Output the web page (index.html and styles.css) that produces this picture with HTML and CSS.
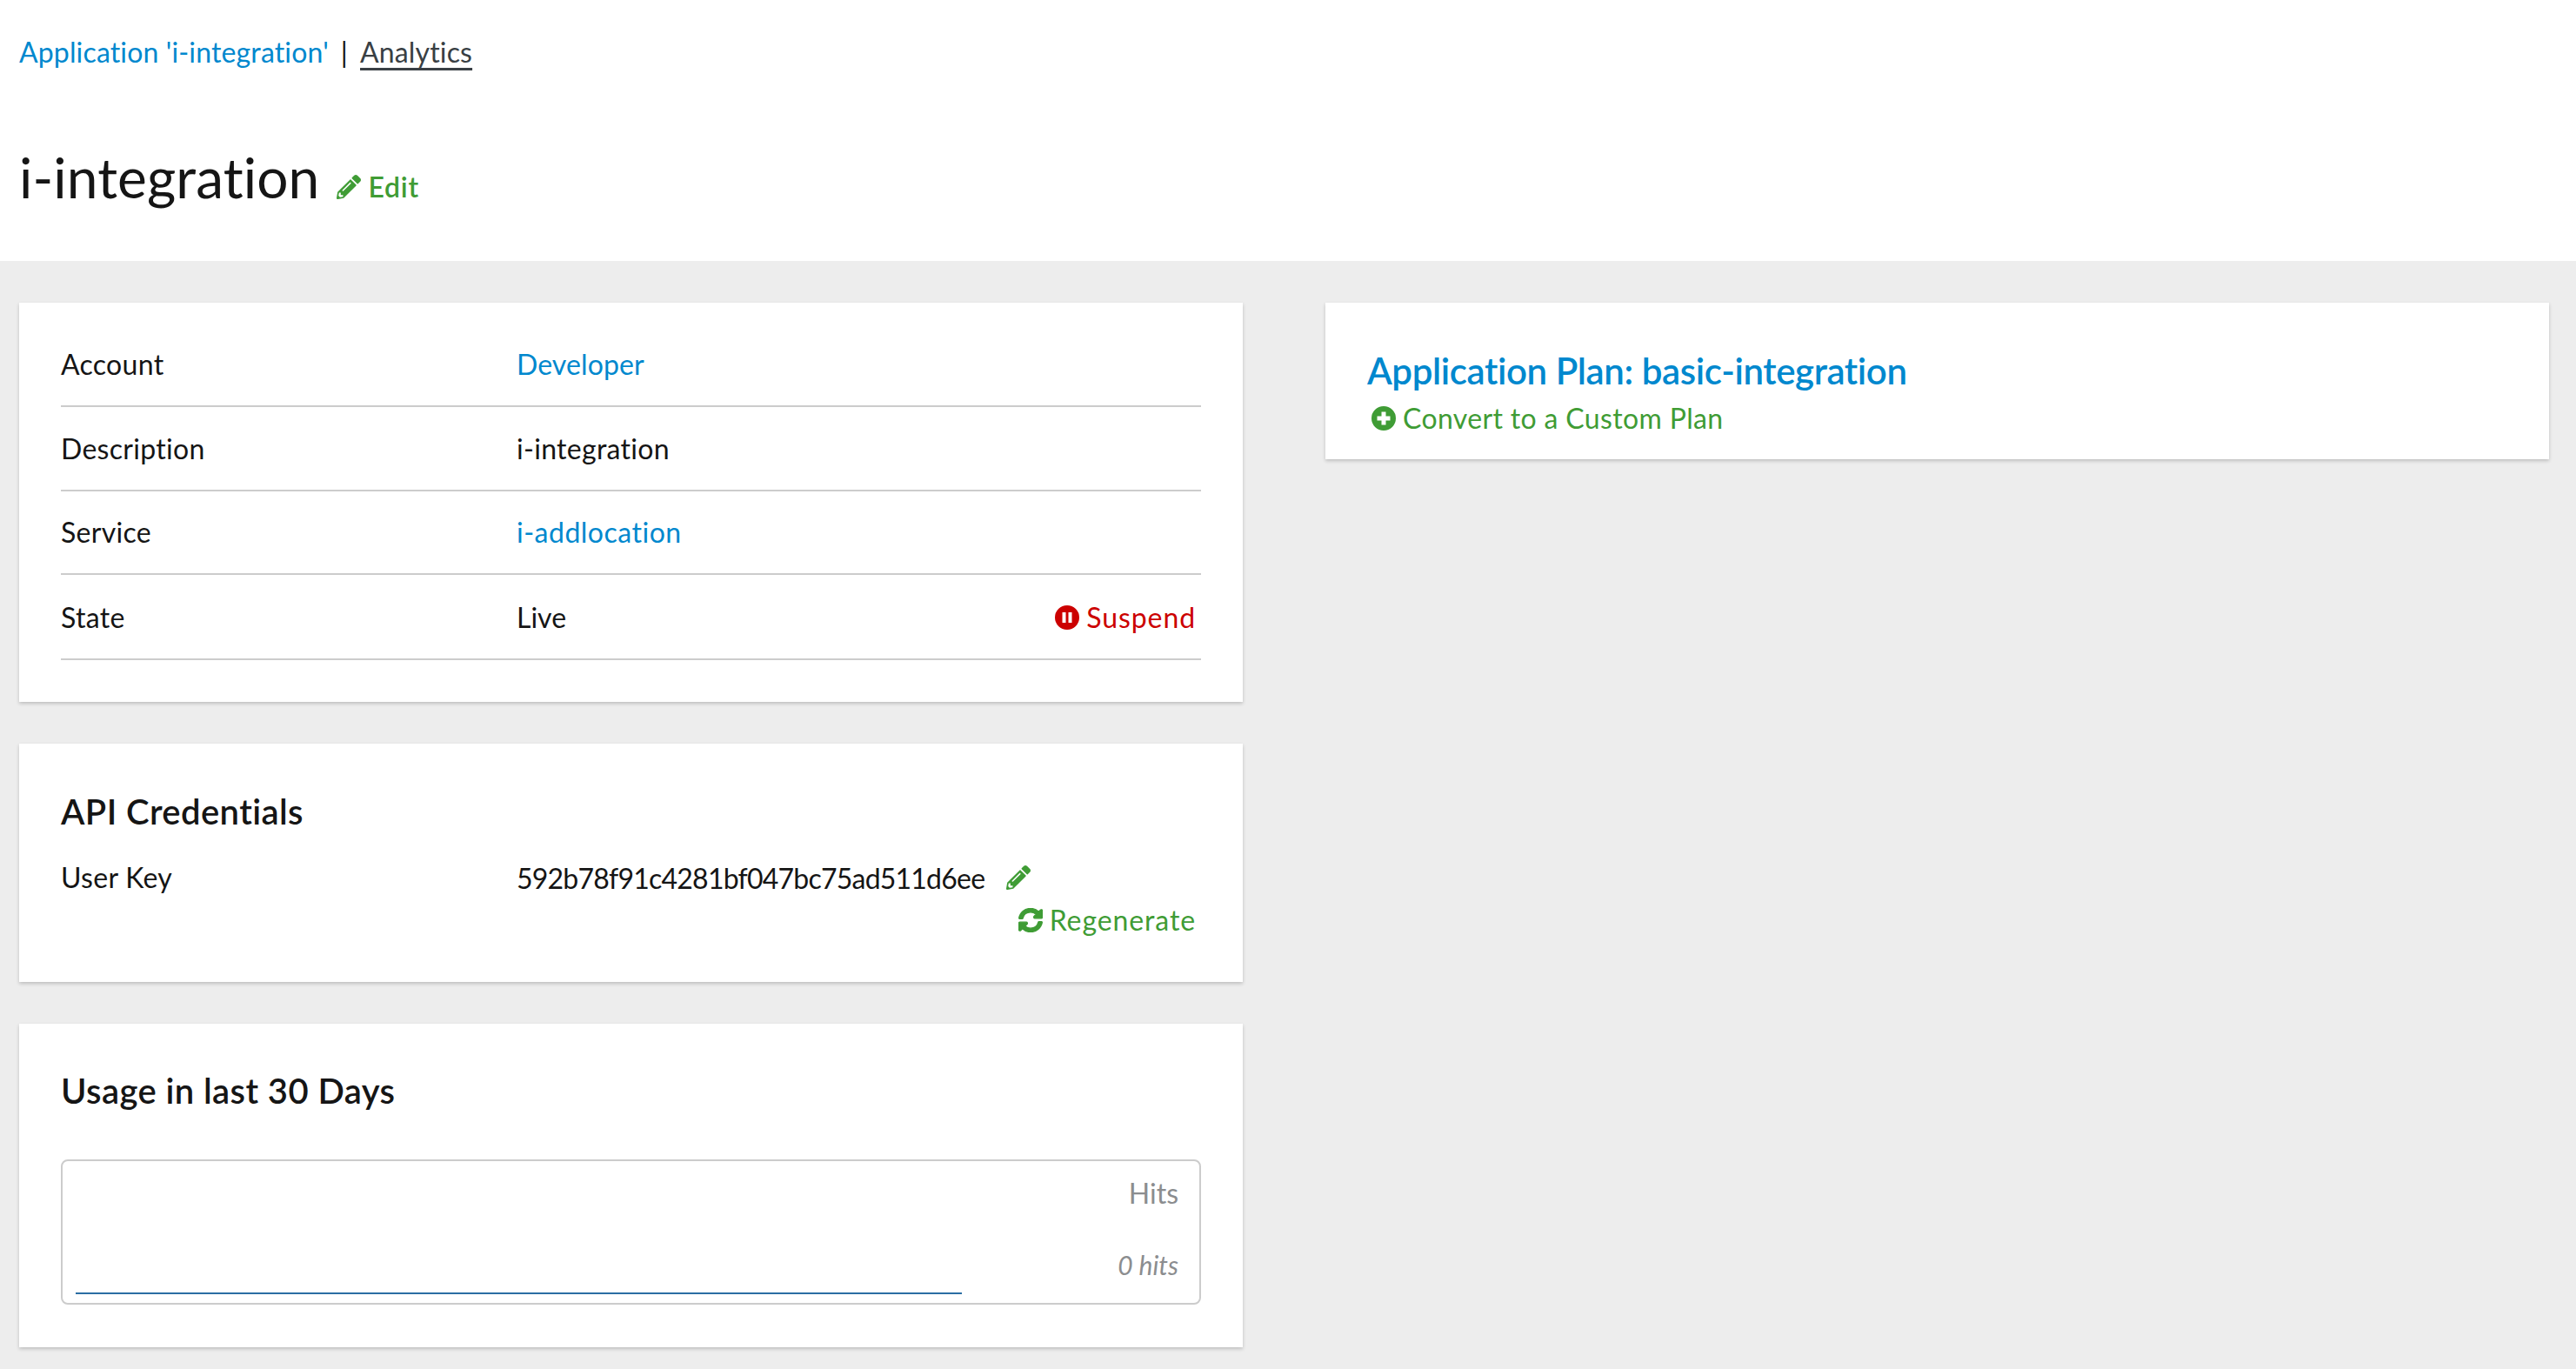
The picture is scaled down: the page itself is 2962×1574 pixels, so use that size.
FILE: index.html
```html
<!DOCTYPE html>
<html lang="en">
<head>
<meta charset="utf-8">
<title>i-integration</title>
<link rel="stylesheet" href="styles.css">
</head>
<body>
<svg class="defs" width="0" height="0" aria-hidden="true">
  <symbol id="pencil" viewBox="0 0 512 512"><path d="M497.9 142.1l-46.1 46.1c-4.7 4.7-12.3 4.7-17 0l-111-111c-4.7-4.7-4.7-12.3 0-17l46.1-46.1c18.7-18.7 49.1-18.7 67.9 0l60.1 60.1c18.8 18.7 18.8 49.1 0 67.9zM284.2 99.8L21.6 362.4.4 483.9c-2.9 16.4 11.4 30.6 27.8 27.8l121.5-21.3 262.6-262.6c4.7-4.7 4.7-12.3 0-17l-111-111c-4.8-4.7-12.4-4.7-17.1 0zM124.1 339.9c-5.5-5.5-5.5-14.3 0-19.8l154-154c5.5-5.5 14.3-5.5 19.8 0s5.5 14.3 0 19.8l-154 154c-5.5 5.5-14.3 5.5-19.8 0zM88 424h48v36.3l-64.5 11.3-31.1-31.1L51.7 376H88v48z"/></symbol>
  <symbol id="sync" viewBox="0 0 512 512"><path stroke="currentColor" stroke-width="24" d="M370.72 133.28C339.458 104.008 298.888 87.962 255.848 88c-77.458.068-144.328 53.178-162.791 126.85-1.344 5.363-6.122 9.15-11.651 9.15H24.103c-7.498 0-13.194-6.807-11.807-14.176C33.933 94.924 134.813 8 256 8c66.448 0 126.791 26.136 171.315 68.685L463.03 40.97C478.149 25.851 504 36.559 504 57.941V192c0 13.255-10.745 24-24 24H345.941c-21.382 0-32.09-25.851-16.971-40.971l41.75-41.749zM32 296h134.059c21.382 0 32.09 25.851 16.971 40.971l-41.75 41.75c31.262 29.273 71.835 45.319 114.876 45.28 77.418-.07 144.315-53.144 162.787-126.849 1.344-5.363 6.122-9.15 11.651-9.15h57.304c7.498 0 13.194 6.807 11.807 14.176C478.067 417.076 377.187 504 256 504c-66.448 0-126.791-26.136-171.315-68.685L48.97 471.03C33.851 486.149 8 475.441 8 454.059V320c0-13.255 10.745-24 24-24z"/></symbol>
  <symbol id="plus" viewBox="0 0 28 28"><path fill-rule="evenodd" d="M14 0a14 14 0 1 1 0 28a14 14 0 1 1 0-28zM11.5 6.5v5h-5v5h5v5h5v-5h5v-5h-5v-5z"/></symbol>
  <symbol id="pause" viewBox="0 0 28 28"><path fill-rule="evenodd" d="M14 0a14 14 0 1 1 0 28a14 14 0 1 1 0-28zM8.5 8v12h4v-12zM15.5 8v12h4v-12z"/></symbol>
</svg>

<header class="top">
  <nav class="crumbs">
    <a class="link" href="#">Application 'i-integration'</a>
    <span class="sep">|</span>
    <a class="crumb-active" href="#">Analytics</a>
  </nav>
  <div class="title-row">
    <h1 class="title">i-integration</h1>
    <a class="edit" href="#"><svg class="ico ico-edit"><use href="#pencil"/></svg>Edit</a>
  </div>
</header>

<main class="layout">
  <div class="col">
    <section class="card card-details">
      <div class="row">
        <div class="label">Account</div>
        <div class="value"><a class="link" href="#">Developer</a></div>
      </div>
      <div class="row">
        <div class="label">Description</div>
        <div class="value desc">i-integration</div>
      </div>
      <div class="row">
        <div class="label">Service</div>
        <div class="value"><a class="link" href="#">i-addlocation</a></div>
      </div>
      <div class="row row-state">
        <div class="label">State</div>
        <div class="value">Live</div>
        <a class="action danger" href="#"><svg class="ico"><use href="#pause"/></svg>Suspend</a>
      </div>
    </section>

    <section class="card card-cred">
      <h2 class="heading">API Credentials</h2>
      <div class="cred">
        <div class="label">User Key</div>
        <div class="value key"><span class="key-text">592b78f91c4281bf047bc75ad511d6ee</span><a class="key-edit" href="#"><svg class="ico"><use href="#pencil"/></svg></a></div>
      </div>
      <div class="regen">
        <a class="action good" href="#"><svg class="ico"><use href="#sync"/></svg>Regenerate</a>
      </div>
    </section>

    <section class="card card-usage">
      <h2 class="heading">Usage in last 30 Days</h2>
      <div class="chart">
        <div class="chart-text">
          <div class="hits-label">Hits</div>
          <div class="hits-value">0 hits</div>
        </div>
        <div class="chart-line"></div>
      </div>
    </section>
  </div>

  <div class="col">
    <section class="card card-plan">
      <h2 class="heading plan-title"><a class="link" href="#">Application Plan: basic-integration</a></h2>
      <a class="action good convert" href="#"><svg class="ico"><use href="#plus"/></svg>Convert to a Custom Plan</a>
    </section>
  </div>
</main>
</body>
</html>
```

FILE: styles.css
```css
* { box-sizing: border-box; }

html, body { margin: 0; padding: 0; }

body {
  background: #ededed;
  color: #151515;
  font-family: "Lato", "Liberation Sans", sans-serif;
  font-size: 32px;
  line-height: 48px;
  height: 1574px;
  overflow: hidden;
}

a { text-decoration: none; }

.defs { position: absolute; }

.link { color: #0088ce; }

.top {
  background: #fff;
  height: 300px;
  padding: 36px 22px 0;
}

.crumbs {
  display: flex;
  align-items: center;
  gap: 14px;
  letter-spacing: 0.15px;
}

.crumb-active {
  color: #393f44;
  text-decoration: underline;
  text-decoration-thickness: 3px;
  text-underline-offset: 6px;
}

.sep { color: #151515; }

.title-row {
  display: flex;
  align-items: flex-end;
  margin-top: 82px;
  gap: 20px;
}

.title {
  margin: 0;
  font-size: 64px;
  font-weight: 400;
  line-height: 76px;
  letter-spacing: 0.1px;
}

.edit {
  display: flex;
  align-items: center;
  color: #3f9c35;
  gap: 8px;
  line-height: 48px;
  margin-bottom: 3px;
  font-weight: 600;
  letter-spacing: 0.8px;
}

.ico {
  width: 28px;
  height: 28px;
  fill: currentColor;
  flex: none;
}

.layout {
  display: grid;
  grid-template-columns: 1407px 1407px;
  column-gap: 95px;
  padding: 48px 22px 0;
}

.col {
  display: flex;
  flex-direction: column;
  gap: 48px;
}

.card {
  background: #fff;
  box-shadow: 0 2px 4px rgba(3, 3, 3, 0.2);
  padding: 48px;
}

.card-details {
  height: 459px;
  padding-top: 23px;
}

.row {
  display: flex;
  align-items: center;
  height: 97px;
  border-bottom: 2px solid #ccc;
}

.row:nth-child(3) { height: 96px; }

.row-state { height: 98px; padding-top: 2px; }

.label { width: 525px; flex: none; }

.value { flex: 1; margin-left: -1px; }

.row .label, .cred .label { letter-spacing: 0.3px; }

.row .link { letter-spacing: 0.1px; }

.row:nth-child(3) .link { letter-spacing: 0.5px; }

.desc { letter-spacing: 0.3px; }

.action {
  display: inline-flex;
  align-items: center;
  gap: 8px;
  letter-spacing: 0.9px;
}

.danger { color: #c00; margin-right: 6px; }

.good { color: #3f9c35; }

.card-cred { height: 274px; padding-top: 54px; }

.heading {
  margin: 0;
  font-size: 40px;
  font-weight: 600;
  line-height: 48px;
  letter-spacing: 0.4px;
}

.cred {
  display: flex;
  margin-top: 28px;
}

.key { display: flex; align-items: center; }

.key-text { letter-spacing: -0.78px; position: relative; top: 1px; }

.key-edit {
  display: flex;
  color: #3f9c35;
  margin-left: 25px;
}

.regen {
  display: flex;
  justify-content: flex-end;
  padding-right: 6px;
  margin-top: 1px;
}

.card-usage { height: 372px; padding-top: 53px; }

.chart {
  position: relative;
  height: 167px;
  margin-top: 55px;
  border: 2px solid #ccc;
  border-radius: 8px;
  padding: 13px 24px 0 14px;
}

.chart-text {
  color: #8b8d8f;
  text-align: right;
}

.hits-value {
  font-style: italic;
  font-size: 30px;
  line-height: 40px;
  margin-top: 38px;
}

.chart-line {
  position: absolute;
  left: 15px;
  bottom: 10px;
  width: 1019px;
  height: 2px;
  background: #2b6ea3;
}

.card-plan { height: 180px; padding: 54px 48px 0; }

.plan-title { font-weight: 600; font-size: 42px; letter-spacing: -0.4px; }

.plan-title .link { color: #0088ce; }

.convert { margin: 7px 0 0 5px; letter-spacing: 0.35px; }
```
